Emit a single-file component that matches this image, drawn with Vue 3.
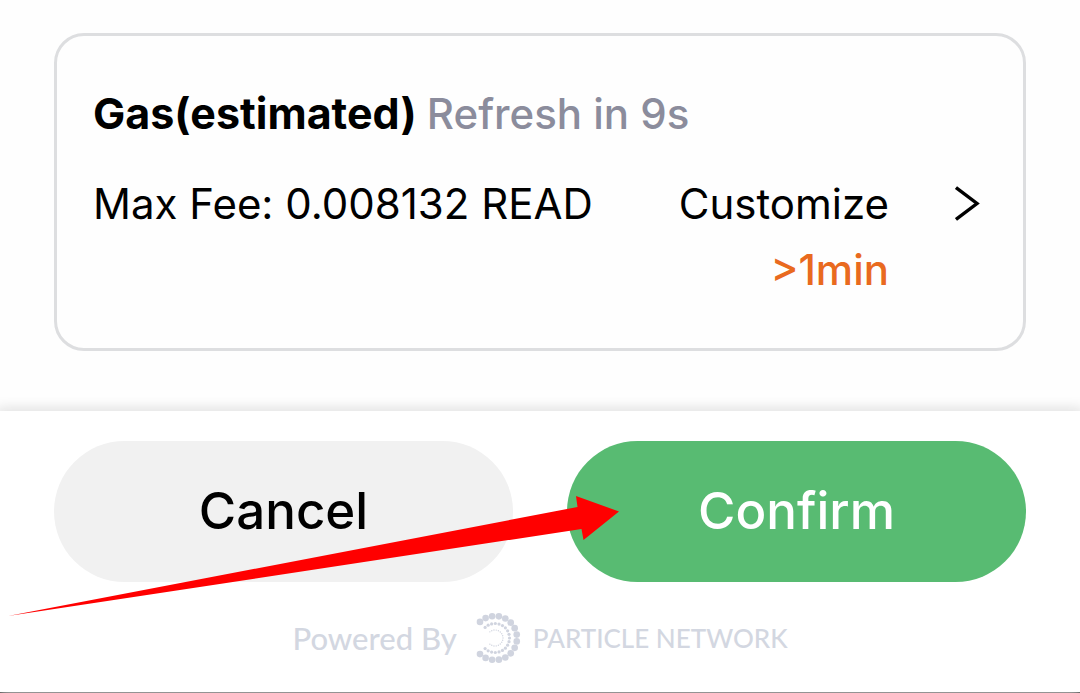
<script setup>
const ring = (count, radius, dot, sweep) =>
  Array.from({ length: count }, (_, i) => {
    const angle = ((-sweep + (2 * sweep * i) / (count - 1)) * Math.PI) / 180
    return {
      x: (26 + radius * Math.cos(angle)).toFixed(2),
      y: (26 + radius * Math.sin(angle)).toFixed(2),
      r: dot,
    }
  })

const dots = [
  ...ring(16, 22, 3.3, 133),
  ...ring(19, 14.5, 1.6, 133),
  ...ring(17, 8, 0.7, 130),
]
</script>

<template>
  <main class="screen">
    <section class="card">
      <h2 class="title">
        Gas(estimated) <span class="refresh">Refresh in 9s</span>
      </h2>
      <div class="row">
        <span class="fee">Max Fee: 0.008132 READ</span>
        <button type="button" class="customize">
          <span class="choice">
            <span>Customize</span>
            <span class="time">&gt;1min</span>
          </span>
          <svg class="chevron" width="26" height="38" viewBox="0 0 26 38" aria-hidden="true">
            <path d="M1 2.500 22 18.500 1 34.500" fill="none" stroke="#000" stroke-width="3.4" />
          </svg>
        </button>
      </div>
    </section>

    <footer class="footer">
      <div class="actions">
        <button type="button" class="action cancel">Cancel</button>
        <button type="button" class="action confirm">Confirm</button>
      </div>
      <svg class="arrow" width="620" height="140" viewBox="0 0 620 140" aria-hidden="true">
        <path d="M8 135 577.500 26 576 15 619 30.500 583.500 59 581.500 48Z" fill="#f00" />
      </svg>
      <p class="powered">
        <span class="by">Powered By</span>
        <svg class="logo" width="52" height="52" viewBox="0 0 52 52" aria-hidden="true">
          <circle v-for="(d, i) in dots" :key="i" :cx="d.x" :cy="d.y" :r="d.r" fill="#d0d4df" />
        </svg>
        <span class="brand">PARTICLE NETWORK</span>
      </p>
    </footer>
  </main>
</template>

<style>
body {
  background: #fff;
}
</style>

<style scoped>
.screen {
  min-height: 100vh;
  box-sizing: border-box;
  display: flex;
  flex-direction: column;
  padding-top: 33px;
  border-bottom: 1px solid #000;
  background: #fefefe;
  color: #000;
  font-family: Inter, "Liberation Sans", sans-serif;
  font-size: 42px;
  line-height: 66px;
}

.card {
  margin: 0 54px 60px;
  padding: 44px 36px 45px;
  border: 3px solid #dddee0;
  border-radius: 30px;
}

.title {
  margin: 0 0 24px;
  font-size: 43px;
  font-weight: 700;
  line-height: 66px;
}

.refresh {
  color: #8b8c9c;
  font-size: 42px;
  font-weight: 500;
}

.row {
  display: flex;
  justify-content: space-between;
  align-items: flex-start;
}

.customize {
  display: flex;
  gap: 66px;
  align-items: flex-start;
  padding: 0 6px 0 0;
  border: 0;
  background: none;
  color: inherit;
  font: inherit;
}

.choice {
  display: flex;
  flex-direction: column;
  align-items: flex-end;
}

.time {
  color: #e96a1f;
  font-weight: 500;
}

.chevron {
  margin-top: 14px;
}

.footer {
  position: relative;
  flex: 1;
  padding: 30px 54px 0;
  background: #fff;
  box-shadow: 0 0 12px 3px #e0e0e0;
}

.actions {
  display: flex;
  gap: 54px;
}

.action {
  flex: 1;
  height: 141px;
  padding: 0 0 2px;
  border: 0;
  border-radius: 71px;
  font: inherit;
  font-size: 51px;
  font-weight: 500;
}

.cancel {
  background: #f1f1f1;
  color: #000;
}

.confirm {
  background: #58bb72;
  color: #fff;
}

.arrow {
  position: absolute;
  top: 70px;
  left: 0;
  pointer-events: none;
}

.powered {
  display: flex;
  justify-content: center;
  align-items: center;
  margin: 30px 0 0;
  color: #d3d7e1;
  font-family: Lato, sans-serif;
  font-size: 31px;
  font-weight: 500;
  line-height: 52px;
}

.brand {
  font-size: 26px;
}

.logo {
  margin: 0 12px;
}
</style>
